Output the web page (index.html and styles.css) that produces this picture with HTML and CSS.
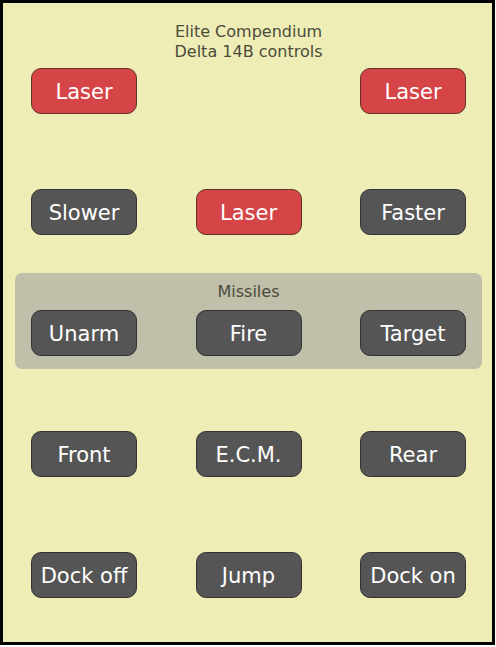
FILE: index.html
```html
<!DOCTYPE html>
<html>
<head>
<meta charset="utf-8">
<link rel="stylesheet" href="styles.css">
</head>
<body>
<div class="frame">
  <div class="title">Elite Compendium<br>Delta 14B controls</div>
  <div class="row row-first">
    <div class="btn red">Laser</div>
    <div class="spacer"></div>
    <div class="btn red">Laser</div>
  </div>
  <div class="row row-gap">
    <div class="btn">Slower</div>
    <div class="btn red">Laser</div>
    <div class="btn">Faster</div>
  </div>
  <div class="panel">
    <div class="panel-label">Missiles</div>
    <div class="row">
      <div class="btn">Unarm</div>
      <div class="btn">Fire</div>
      <div class="btn">Target</div>
    </div>
  </div>
  <div class="row row-after-panel">
    <div class="btn">Front</div>
    <div class="btn">E.C.M.</div>
    <div class="btn">Rear</div>
  </div>
  <div class="row row-gap">
    <div class="btn">Dock off</div>
    <div class="btn">Jump</div>
    <div class="btn">Dock on</div>
  </div>
</div>
</body>
</html>
```
FILE: styles.css
```css
html, body {
  margin: 0;
  padding: 0;
  background: #ffffff;
}
body {
  font-family: "DejaVu Sans", Verdana, sans-serif;
}
.frame {
  width: 467px;
  height: 639px;
  padding: 0 10px 0 12px;
  border: 3px solid #000000;
  background: #eeedb5;
}
.title {
  padding-top: 19px;
  font-size: 16px;
  line-height: 20px;
  text-align: center;
  color: #4b4b3c;
}
.row {
  display: grid;
  grid-template-columns: repeat(3, 106px);
  justify-content: space-between;
  padding: 0 16px;
}
.row-first {
  margin-top: 6px;
}
.row-gap {
  margin-top: 75px;
}
.row-after-panel {
  margin-top: 62px;
}
.btn {
  box-sizing: border-box;
  height: 46px;
  border: 1px solid #333333;
  border-radius: 10px;
  background: #555555;
  color: #ffffff;
  font-size: 21px;
  line-height: 46px;
  text-align: center;
  white-space: nowrap;
  overflow: hidden;
}
.btn.red {
  background: #d54447;
  border-color: #5e3328;
}
.panel {
  margin-top: 38px;
  padding: 9px 0 13px;
  background: #c0c0aa;
  border-radius: 7px;
}
.panel-label {
  font-size: 16px;
  line-height: 20px;
  text-align: center;
  color: #4b4b3c;
  margin-bottom: 8px;
}
```
